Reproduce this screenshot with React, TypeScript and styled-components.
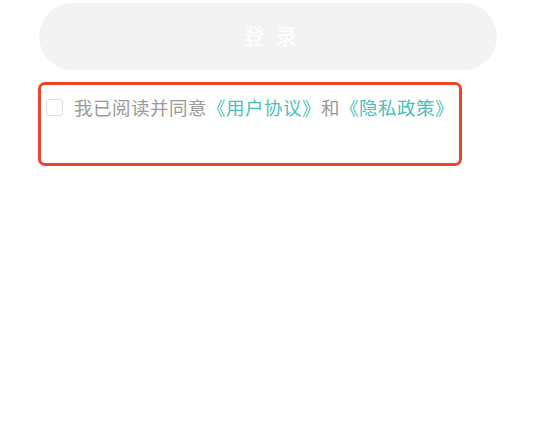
import React, { useState } from 'react'
import styled, { createGlobalStyle } from 'styled-components'

const GlobalStyle = createGlobalStyle`
  html, body {
    margin: 0;
    padding: 0;
    background: #ffffff;
    font-family: "Noto Sans CJK SC", "Noto Sans", sans-serif;
  }
`

export default function App() {
  const [checked, setChecked] = useState<boolean>(false)

  return (
    <>
      <GlobalStyle />
      <Page>
        <LoginButton type="button">登录</LoginButton>
        <AgreementBox>
          <AgreementRow>
            <CheckBox checked={checked} onClick={() => setChecked(prev => !prev)} />
            <AgreementText>
              我已阅读并同意<Link>《用户协议》</Link>和<Link>《隐私政策》</Link>
            </AgreementText>
          </AgreementRow>
        </AgreementBox>
      </Page>
    </>
  )
}

const Page = styled.main`
  display: flex;
  flex-direction: column;
  align-items: flex-start;
  padding: 3px 0 0 38px;
`

const LoginButton = styled.button`
  display: flex;
  align-items: center;
  justify-content: center;

  margin-left: 1px;
  width: 458px;
  height: 67px;
  padding: 0 0 6px 14px;

  border: none;
  border-radius: 34px;
  background: #f3f3f3;

  color: #ffffff;
  font-family: "Noto Sans CJK SC", sans-serif;
  font-size: 22px;
  letter-spacing: 10px;
`

const AgreementBox = styled.section`
  box-sizing: border-box;
  margin-top: 12px;
  width: 424px;
  height: 84px;
  padding: 11px 0 0 5px;

  border: 3px solid #ec4529;
  border-radius: 7px;
`

const AgreementRow = styled.div`
  display: flex;
  align-items: center;
  gap: 11px;
`

const CheckBox = styled.span<{ checked: boolean }>`
  box-sizing: border-box;
  width: 17px;
  height: 17px;

  border: 1px solid #dedede;
  border-radius: 3px;
  background: ${({ checked }) => (checked ? '#4bbfb8' : '#ffffff')};
  cursor: pointer;
`

const AgreementText = styled.p`
  margin: 0;
  color: #9a9a9a;
  font-size: 18.5px;
  line-height: 22px;
  letter-spacing: 0.5px;
  white-space: nowrap;
`

const Link = styled.span`
  color: #4bbfb8;
`
